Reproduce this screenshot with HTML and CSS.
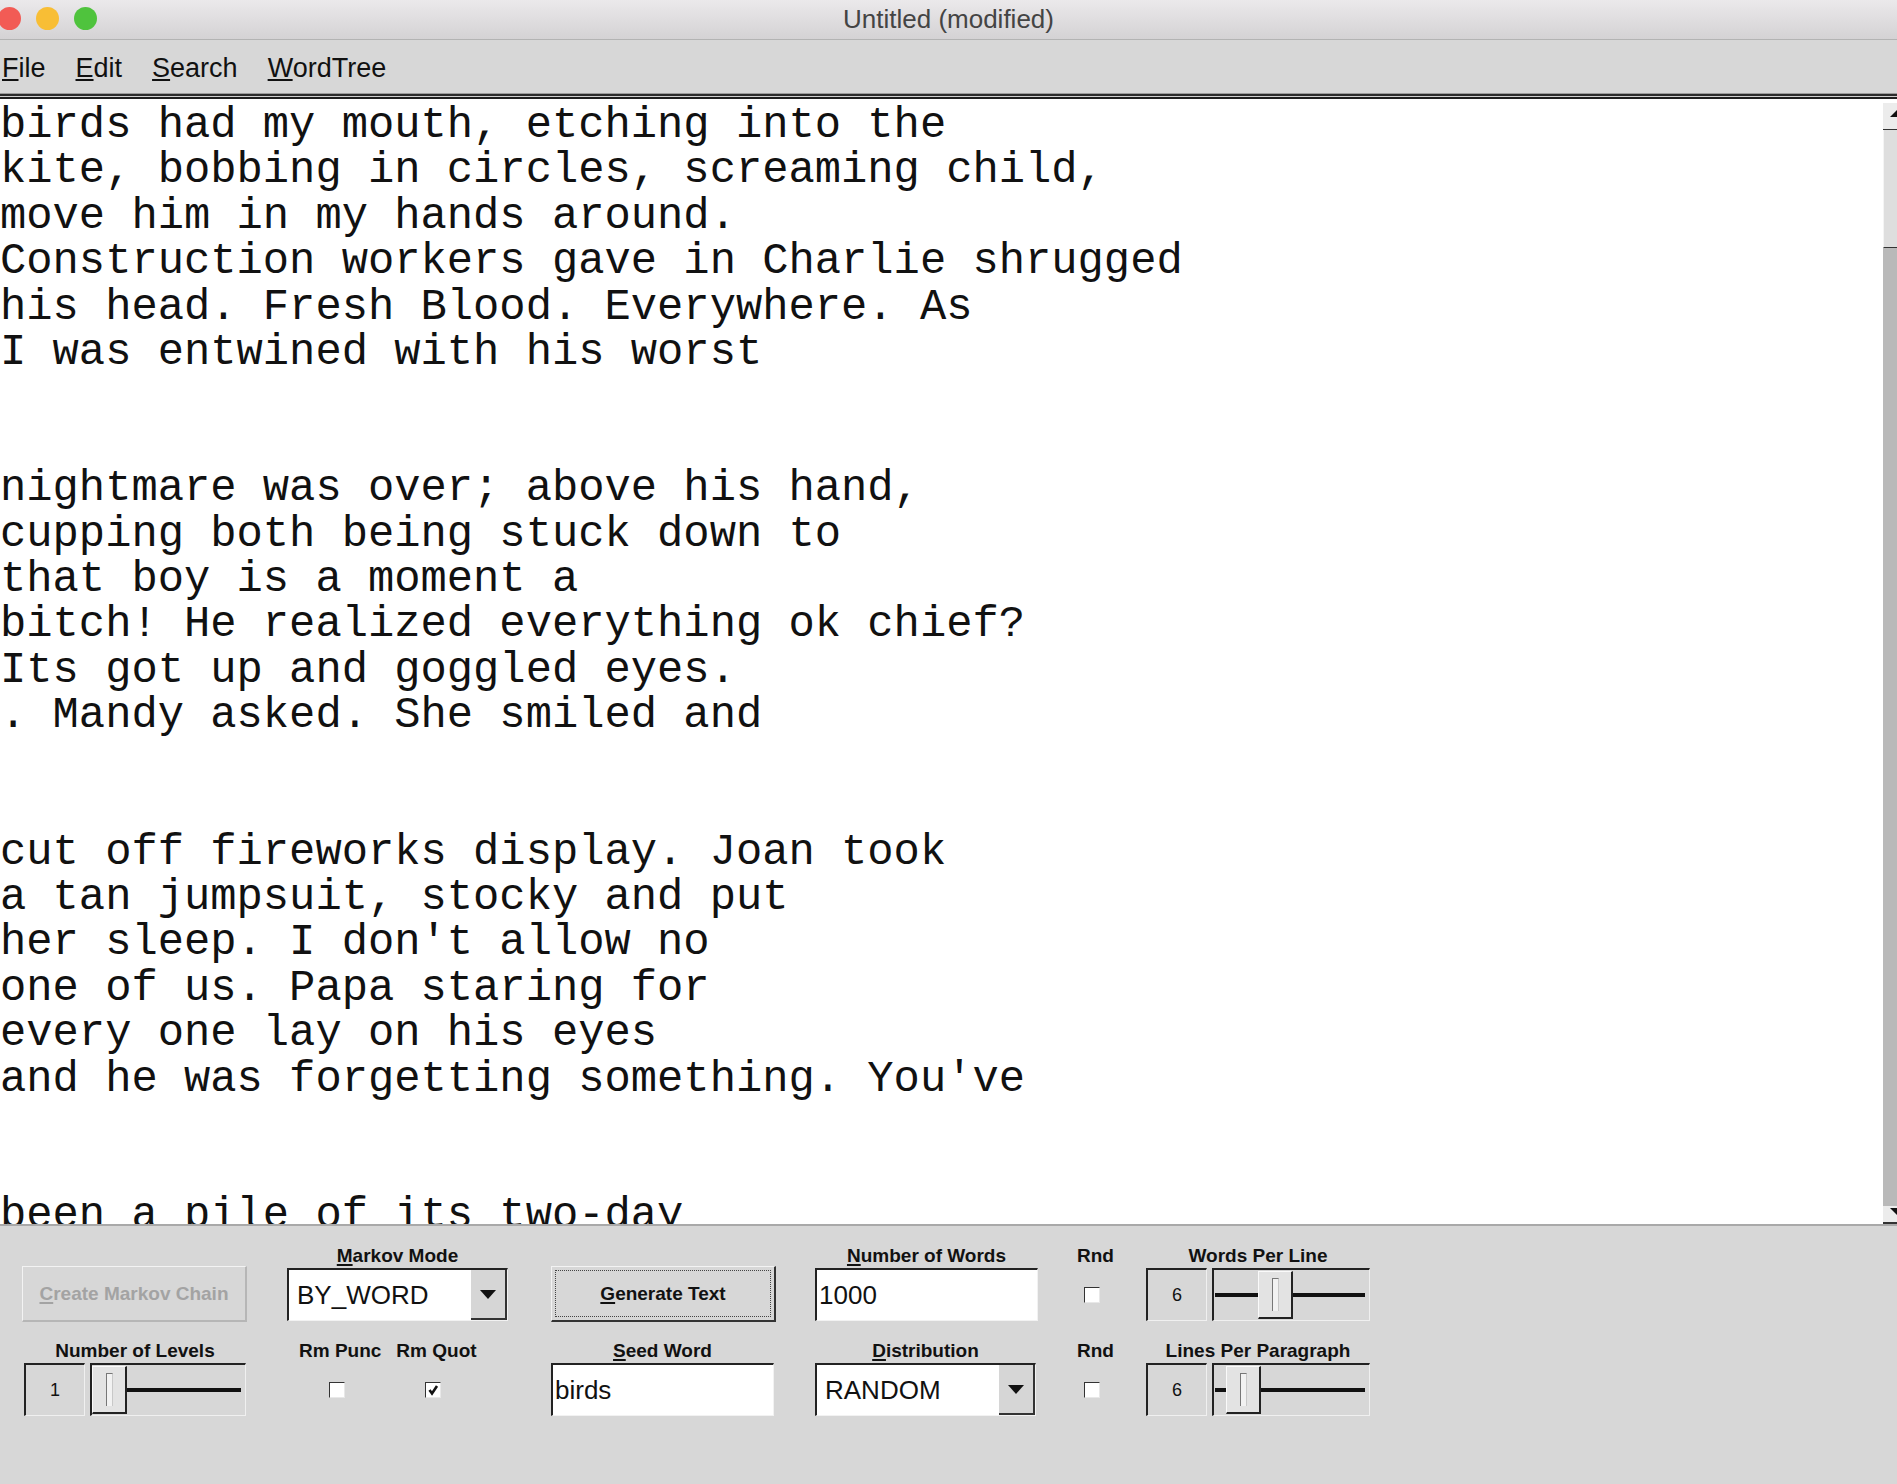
FILE: index.html
```html
<!DOCTYPE html>
<html lang="en">
<head>
    <meta charset="UTF-8">
    <title>Untitled (modified)</title>
    <link rel="stylesheet" href="styles.css">
</head>
<body>

<div class="window">

    <div class="titlebar">
        <div class="lights">
            <span class="light red"></span>
            <span class="light yellow"></span>
            <span class="light green"></span>
        </div>
        <div class="title">Untitled (modified)</div>
        <div></div>
    </div>

    <div class="menubar">
        <span><u>F</u>ile</span>
        <span><u>E</u>dit</span>
        <span><u>S</u>earch</span>
        <span><u>W</u>ordTree</span>
    </div>
    <div class="rule"></div>

    <div class="editor">
<pre class="text">birds had my mouth, etching into the
kite, bobbing in circles, screaming child,
move him in my hands around.
Construction workers gave in Charlie shrugged
his head. Fresh Blood. Everywhere. As
I was entwined with his worst


nightmare was over; above his hand,
cupping both being stuck down to
that boy is a moment a
bitch! He realized everything ok chief?
Its got up and goggled eyes.
. Mandy asked. She smiled and


cut off fireworks display. Joan took
a tan jumpsuit, stocky and put
her sleep. I don't allow no
one of us. Papa staring for
every one lay on his eyes
and he was forgetting something. You've


been a pile of its two-day</pre>
        <div class="vscroll">
            <div class="sb-up">
                <svg width="14" height="26" viewBox="0 0 14 26"><polygon points="7,14 14,7 21,14" fill="#111"/></svg>
            </div>
            <div class="sb-thumb"></div>
            <div class="sb-track"></div>
            <div class="sb-down">
                <svg width="14" height="16" viewBox="0 0 14 16"><polygon points="7,2 21,2 14,9" fill="#111"/></svg>
            </div>
        </div>
    </div>

    <div class="controls">
        <!-- row 1 -->
        <div class="cell">
            <button class="btn disabled"><u>C</u>reate Markov Chain</button>
        </div>
        <div class="cell">
            <div class="label"><u>M</u>arkov Mode</div>
            <div class="combo">
                <span class="combo-value">BY_WORD</span>
                <span class="combo-arrow"><svg width="16" height="9" viewBox="0 0 16 9"><polygon points="0,0 16,0 8,9" fill="#111"/></svg></span>
            </div>
        </div>
        <div class="cell">
            <button class="btn"><span class="focus-ring"><u>G</u>enerate Text</span></button>
        </div>
        <div class="cell">
            <div class="label"><u>N</u>umber of Words</div>
            <div class="field">1000</div>
        </div>
        <div class="cell">
            <div class="label">Rnd</div>
            <div class="check-box"><span class="check"></span></div>
        </div>
        <div class="cell">
            <div class="label">Words Per Line</div>
            <div class="spin">
                <div class="spin-value">6</div>
                <div class="slider">
                    <span class="slider-line"></span>
                    <span class="thumb" style="left: 44px"></span>
                </div>
            </div>
        </div>

        <!-- row 2 -->
        <div class="cell levels-cell">
            <div class="label">Number of Levels</div>
            <div class="spin levels">
                <div class="spin-value">1</div>
                <div class="slider">
                    <span class="slider-line"></span>
                    <span class="thumb" style="left: 0px"></span>
                </div>
            </div>
        </div>
        <div class="cell-row">
            <div class="cell">
                <div class="label">Rm Punc</div>
                <div class="check-box"><span class="check"></span></div>
            </div>
            <div class="cell">
                <div class="label">Rm Quot</div>
                <div class="check-box">
                    <span class="check">
                        <svg width="12" height="12" viewBox="0 0 12 12"><path d="M2.5 6 L5 9.5 L10 2" fill="none" stroke="#111" stroke-width="2.6"/></svg>
                    </span>
                </div>
            </div>
        </div>
        <div class="cell">
            <div class="label"><u>S</u>eed Word</div>
            <div class="field">birds</div>
        </div>
        <div class="cell">
            <div class="label"><u>D</u>istribution</div>
            <div class="combo">
                <span class="combo-value">RANDOM</span>
                <span class="combo-arrow"><svg width="16" height="9" viewBox="0 0 16 9"><polygon points="0,0 16,0 8,9" fill="#111"/></svg></span>
            </div>
        </div>
        <div class="cell">
            <div class="label">Rnd</div>
            <div class="check-box"><span class="check"></span></div>
        </div>
        <div class="cell">
            <div class="label">Lines Per Paragraph</div>
            <div class="spin">
                <div class="spin-value">6</div>
                <div class="slider">
                    <span class="slider-line"></span>
                    <span class="thumb" style="left: 12px"></span>
                </div>
            </div>
        </div>
    </div>

</div>

</body>
</html>
```

FILE: styles.css
```css
* {
    box-sizing: border-box;
}
body {
    margin: 0;
    width: 1897px;
    height: 1484px;
    overflow: hidden;
    font-family: "Liberation Sans", Arial, sans-serif;
}
.window {
    display: flex;
    flex-direction: column;
    height: 1484px;
    background-color: #d7d7d7;
}

/* title bar */
.titlebar {
    height: 40px;
    border-bottom: 1px solid #b3b3b3;
    background: linear-gradient(#ebe9eb, #d4d2d4);
    display: grid;
    grid-template-columns: 1fr auto 1fr;
    align-items: center;
}
.lights {
    display: flex;
    gap: 15px;
    margin-left: -2px;
    margin-top: -2px;
}
.light {
    width: 23px;
    height: 23px;
    border-radius: 50%;
}
.red { background-color: #f25b55; }
.yellow { background-color: #f8be35; }
.green { background-color: #4fc33d; }
.title {
    font-size: 26px;
    color: #444;
}

/* menu */
.menubar {
    height: 53px;
    display: flex;
    align-items: center;
    gap: 30px;
    padding: 4px 0 0 2px;
    font-size: 27px;
    color: #111;
}
.rule {
    height: 6px;
    background: linear-gradient(to bottom, #9c9c9c 0 1px, #2b2b2b 1px 3px, #d0d0d0 3px 4px, #1f1f1f 4px 6px);
}

/* editor */
.editor {
    height: 1127px;
    display: flex;
    background-color: #fff;
    border-bottom: 2px solid #a9a9a9;
}
.text {
    flex: 1;
    margin: 0;
    padding: 4px 0 0 0;
    overflow: hidden;
    font-family: "Liberation Mono", "Courier New", monospace;
    font-size: 43.8px;
    line-height: 45.4px;
    color: #111;
}
.vscroll {
    width: 14px;
    display: flex;
    flex-direction: column;
    padding-top: 4px;
}
.sb-up {
    height: 27px;
    background-color: #ececec;
    border-bottom: 1px solid #333;
}
.sb-up svg, .sb-down svg {
    display: block;
}
.sb-thumb {
    height: 118px;
    background-color: #dedede;
    border-left: 1px solid #f4f4f4;
    border-bottom: 1px solid #333;
}
.sb-track {
    flex: 1;
    background-color: #b9b9b9;
}
.sb-down {
    height: 18px;
    background-color: #ececec;
    border-bottom: 2px solid #333;
}

/* bottom panel */
.controls {
    flex: 1;
    display: grid;
    grid-template-columns: 265px 264px 264px 262px 69px 224px;
    align-content: start;
    justify-items: start;
    row-gap: 17px;
    padding: 18px 0 0 22px;
}
.cell {
    display: flex;
    flex-direction: column;
    align-items: center;
    gap: 1px;
}
.levels-cell {
    margin-left: 2px;
}
.cell-row {
    display: flex;
    gap: 15px;
    padding-left: 12px;
}
.label {
    font-size: 19px;
    font-weight: bold;
    line-height: 23px;
    color: #111;
    white-space: nowrap;
}
u {
    text-decoration-thickness: 2px;
    text-underline-offset: 2px;
}

.btn {
    width: 225px;
    height: 56px;
    margin-top: 22px;
    padding: 0;
    font-family: "Liberation Sans", Arial, sans-serif;
    font-size: 19px;
    font-weight: bold;
    background-color: #d7d7d7;
    border-top: 1px solid #f3f3f3;
    border-left: 1px solid #f3f3f3;
    border-right: 2px solid #333;
    border-bottom: 2px solid #333;
    color: #111;
}
.btn.disabled {
    color: #a3a3a3;
    border-right-color: #b6b6b6;
    border-bottom-color: #b6b6b6;
}
.focus-ring {
    display: flex;
    align-items: center;
    justify-content: center;
    height: 47px;
    margin: 0 3px;
    border: 1px dotted #444;
}

.field,
.combo {
    width: 223px;
    height: 53px;
    display: flex;
    align-items: center;
    background-color: #fff;
    border-top: 2px solid #222;
    border-left: 2px solid #222;
    border-right: 1px solid #f2f2f2;
    border-bottom: 1px solid #f2f2f2;
    font-size: 26px;
    color: #111;
}
.field {
    padding-left: 2px;
}
.combo {
    width: 221px;
    align-items: stretch;
}
.combo-value {
    flex: 1;
    display: flex;
    align-items: center;
    padding-left: 8px;
}
.combo-arrow {
    width: 36px;
    display: flex;
    align-items: center;
    justify-content: center;
    background-color: #d6d6d6;
    border-right: 2px solid #333;
    border-bottom: 2px solid #333;
}

.check-box {
    height: 53px;
    display: flex;
    align-items: center;
    justify-content: center;
    padding-right: 7px;
}
.check {
    width: 16px;
    height: 16px;
    display: flex;
    align-items: center;
    justify-content: center;
    background-color: #fff;
    border-top: 1px solid #333;
    border-left: 1px solid #333;
    border-right: 1px solid #e8e8e8;
    border-bottom: 1px solid #e8e8e8;
}

.spin {
    display: flex;
    gap: 5px;
    width: 224px;
}
.spin.levels {
    width: 222px;
}
.spin-value {
    width: 61px;
    height: 53px;
    display: flex;
    align-items: center;
    justify-content: center;
    border-top: 2px solid #222;
    border-left: 2px solid #222;
    border-right: 1px solid #f0f0f0;
    border-bottom: 1px solid #f0f0f0;
    font-size: 18px;
    color: #111;
}
.slider {
    position: relative;
    flex: 1;
    height: 53px;
    border-top: 2px solid #222;
    border-left: 2px solid #222;
    border-right: 1px solid #f0f0f0;
    border-bottom: 1px solid #f0f0f0;
}
.slider-line {
    position: absolute;
    left: 1px;
    right: 4px;
    top: 23px;
    height: 4px;
    background-color: #111;
}
.thumb {
    position: absolute;
    top: 1px;
    bottom: 1px;
    width: 35px;
    background-color: #e3e3e3;
    border-top: 1px solid #fafafa;
    border-left: 1px solid #fafafa;
    border-right: 2px solid #222;
    border-bottom: 2px solid #222;
}
.thumb::after {
    content: "";
    position: absolute;
    left: 13px;
    top: 6px;
    bottom: 6px;
    width: 5px;
    background-color: #f2f2f2;
    border-left: 1px solid #777;
    border-top: 1px solid #777;
    border-right: 1px solid #c8c8c8;
}
```
